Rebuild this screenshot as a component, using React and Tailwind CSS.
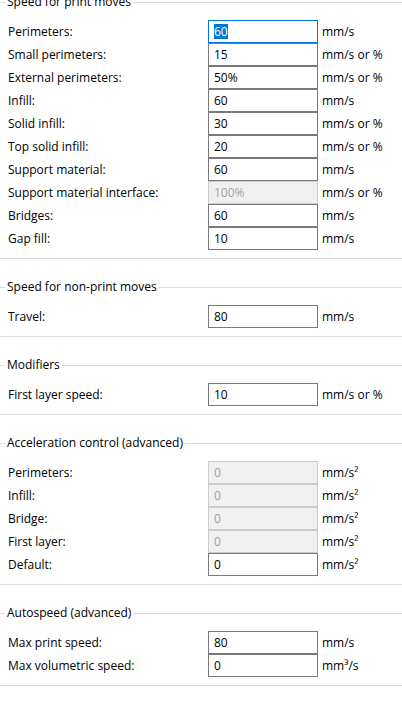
import React from 'react'

const font = { fontFamily: '"Open Sans", "Noto Sans", Arial, sans-serif' }

const groups = [
  {
    title: 'Speed for print moves',
    rows: [
      { label: 'Perimeters:', value: '60', unit: 'mm/s', focused: true },
      { label: 'Small perimeters:', value: '15', unit: 'mm/s or %' },
      { label: 'External perimeters:', value: '50%', unit: 'mm/s or %' },
      { label: 'Infill:', value: '60', unit: 'mm/s' },
      { label: 'Solid infill:', value: '30', unit: 'mm/s or %' },
      { label: 'Top solid infill:', value: '20', unit: 'mm/s or %' },
      { label: 'Support material:', value: '60', unit: 'mm/s' },
      { label: 'Support material interface:', value: '100%', unit: 'mm/s or %', disabled: true },
      { label: 'Bridges:', value: '60', unit: 'mm/s' },
      { label: 'Gap fill:', value: '10', unit: 'mm/s' },
    ],
  },
  {
    title: 'Speed for non-print moves',
    rows: [{ label: 'Travel:', value: '80', unit: 'mm/s' }],
  },
  {
    title: 'Modifiers',
    rows: [{ label: 'First layer speed:', value: '10', unit: 'mm/s or %' }],
  },
  {
    title: 'Acceleration control (advanced)',
    rows: [
      { label: 'Perimeters:', value: '0', unit: 'mm/s²', disabled: true },
      { label: 'Infill:', value: '0', unit: 'mm/s²', disabled: true },
      { label: 'Bridge:', value: '0', unit: 'mm/s²', disabled: true },
      { label: 'First layer:', value: '0', unit: 'mm/s²', disabled: true },
      { label: 'Default:', value: '0', unit: 'mm/s²' },
    ],
  },
  {
    title: 'Autospeed (advanced)',
    rows: [
      { label: 'Max print speed:', value: '80', unit: 'mm/s' },
      { label: 'Max volumetric speed:', value: '0', unit: 'mm³/s' },
    ],
  },
]

function Field({ value, focused, disabled }) {
  let cls = 'border-[#7a7a7a] bg-white text-black'
  if (focused) cls = 'border-[#0078d7] bg-white text-black'
  if (disabled) cls = 'border-[#cccccc] bg-[#f0f0f0] text-[#a0a0a0]'
  return (
    <div className={`w-[110px] h-[23px] border flex items-center pl-[5px] ${cls}`}>
      {focused ? <span className="bg-[#0078d7] text-white leading-[15px]">{value}</span> : <span>{value}</span>}
    </div>
  )
}

function Group({ title, rows, first }) {
  return (
    <div className={first ? '-mt-[6px]' : 'mt-[20px]'}>
      <div className="flex items-center h-[16px]">
        <div className="w-[5px] h-px bg-[#dcdcdc]" />
        <span className="px-[2px] text-black whitespace-nowrap">{title}</span>
        <div className="flex-1 h-px bg-[#dcdcdc]" />
      </div>
      <div className="mt-[10px] flex flex-col">
        {rows.map((r, i) => (
          <div key={i} className="flex items-center h-[23px]">
            <div className="w-[208px] pl-[8px] text-black whitespace-nowrap">{r.label}</div>
            <Field value={r.value} focused={r.focused} disabled={r.disabled} />
            <div className="pl-[4px] text-black whitespace-nowrap">{r.unit}</div>
          </div>
        ))}
      </div>
      <div className="mt-[8px] h-px bg-[#dcdcdc]" />
    </div>
  )
}

export default function App() {
  return (
    <div className="w-[402px] h-[703px] overflow-hidden bg-white text-[12px]" style={font}>
      {groups.map((g, i) => (
        <Group key={i} {...g} first={i === 0} />
      ))}
    </div>
  )
}
